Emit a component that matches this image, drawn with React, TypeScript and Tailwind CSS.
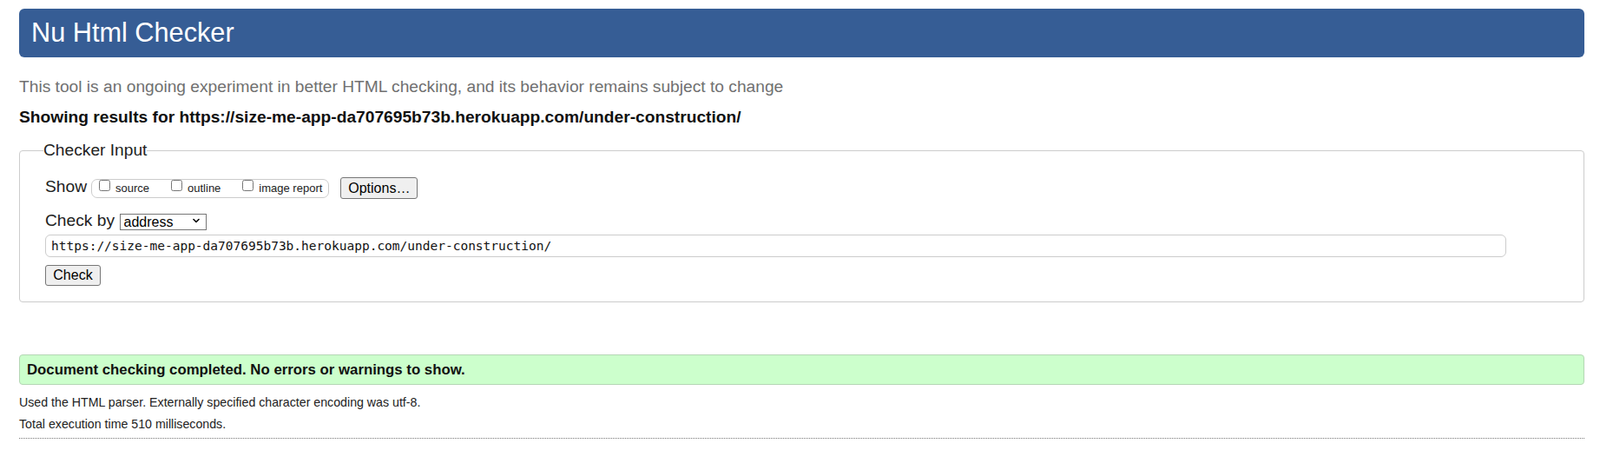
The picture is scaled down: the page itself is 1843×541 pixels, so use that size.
import React from 'react';
import { ChevronDown } from 'lucide-react';

const url = 'https://size-me-app-da707695b73b.herokuapp.com/under-construction/';

const showOptions = [
  { id: 'source', label: 'source' },
  { id: 'outline', label: 'outline' },
  { id: 'image-report', label: 'image report' },
];

const App: React.FC = () => {
  return (
    <div className="min-h-screen bg-white pl-[22px] pr-[18px] pt-[10px] font-['Liberation_Sans',Arial,sans-serif] text-black">
      {/* Title bar */}
      <h1 className="flex h-[56px] items-center rounded-[6px] bg-[#365d95] pl-[14px] text-[30.7px] font-normal text-white">
        Nu Html Checker
      </h1>

      <p className="mt-[22px] text-[19.2px] leading-[24px] text-[#707070]">
        This tool is an ongoing experiment in better HTML checking, and its behavior remains subject to change
      </p>
      <p className="mt-[11px] text-[19.2px] font-bold leading-[24px] text-[#111]">
        Showing results for {url}
      </p>

      {/* Checker input */}
      <fieldset className="mt-[15px] rounded-[4px] border border-[#cccccc] pb-[18px] pl-[27px] pt-[20px]">
        <legend className="text-[19.2px] leading-[22px] text-[#222]">Checker Input</legend>
        <div className="pl-[2px]">
          <div className="flex h-[25px] items-start">
            <span className="mt-[1px] text-[19.2px] leading-[20px] text-[#222]">Show</span>
            <div className="ml-[5px] mt-[2px] flex h-[22px] items-center rounded-[7px] border border-[#cccccc] pl-[8px] pr-[7px]">
              {showOptions.map((opt, i) => (
                <label
                  key={opt.id}
                  htmlFor={opt.id}
                  className={`flex h-full items-center ${i > 0 ? 'ml-[25px]' : ''}`}
                >
                  <input id={opt.id} type="checkbox" className="m-0 h-[13px] w-[13px] self-start" />
                  <span className="ml-[6px] text-[13px] leading-[16px] text-[#222]">{opt.label}</span>
                </label>
              ))}
            </div>
            <button className="ml-[13px] h-[25px] w-[89px] rounded-[3px] border border-[#767676] bg-[#efefef] font-['Liberation_Sans',Arial,sans-serif] text-[16px] leading-[20px] text-black">
              Options…
            </button>
          </div>

          <div className="mt-[15px] flex items-start">
            <span className="text-[19.2px] leading-[20px] text-[#222]">Check by</span>
            <div className="relative ml-[6px] h-[19.5px] w-[100px]">
              <select
                defaultValue="address"
                className="h-full w-full appearance-none border border-[#767676] bg-white pl-[3.5px] font-['Liberation_Sans',Arial,sans-serif] text-[16px] leading-[17px] text-black"
              >
                <option value="address">address</option>
                <option value="file">file upload</option>
                <option value="text">text input</option>
              </select>
              <ChevronDown
                className="pointer-events-none absolute right-[6px] top-[4px] h-[12px] w-[12px] text-black"
                strokeWidth={3.2}
              />
            </div>
          </div>

          <input
            type="text"
            defaultValue={url}
            className="mt-[6px] block h-[26px] w-[1683px] rounded-[6px] border border-[#cccccc] pl-[6px] font-['DejaVu_Sans_Mono','Liberation_Mono',monospace] text-[14.5px] text-[#111] outline-none"
          />

          <button className="mt-[9px] block h-[24px] w-[64px] rounded-[3px] border border-[#767676] bg-[#efefef] font-['Liberation_Sans',Arial,sans-serif] text-[16px] leading-[20px] text-black">
            Check
          </button>
        </div>
      </fieldset>

      {/* Result */}
      <div className="mt-[60px] flex h-[35px] items-center rounded-[4px] border border-[#b4d6b4] bg-[#ccffcc] pl-[8px] text-[16.8px] font-bold text-[#111]">
        Document checking completed. No errors or warnings to show.
      </div>
      <p className="mt-[8px] text-[14.2px] leading-[25px] text-[#222]">
        Used the HTML parser. Externally specified character encoding was utf-8.
      </p>
      <p className="text-[14.2px] leading-[25px] text-[#222]">Total execution time 510 milliseconds.</p>
      <div className="mt-[3px] border-t border-dotted border-[#777]" />
    </div>
  );
};

export default App;
